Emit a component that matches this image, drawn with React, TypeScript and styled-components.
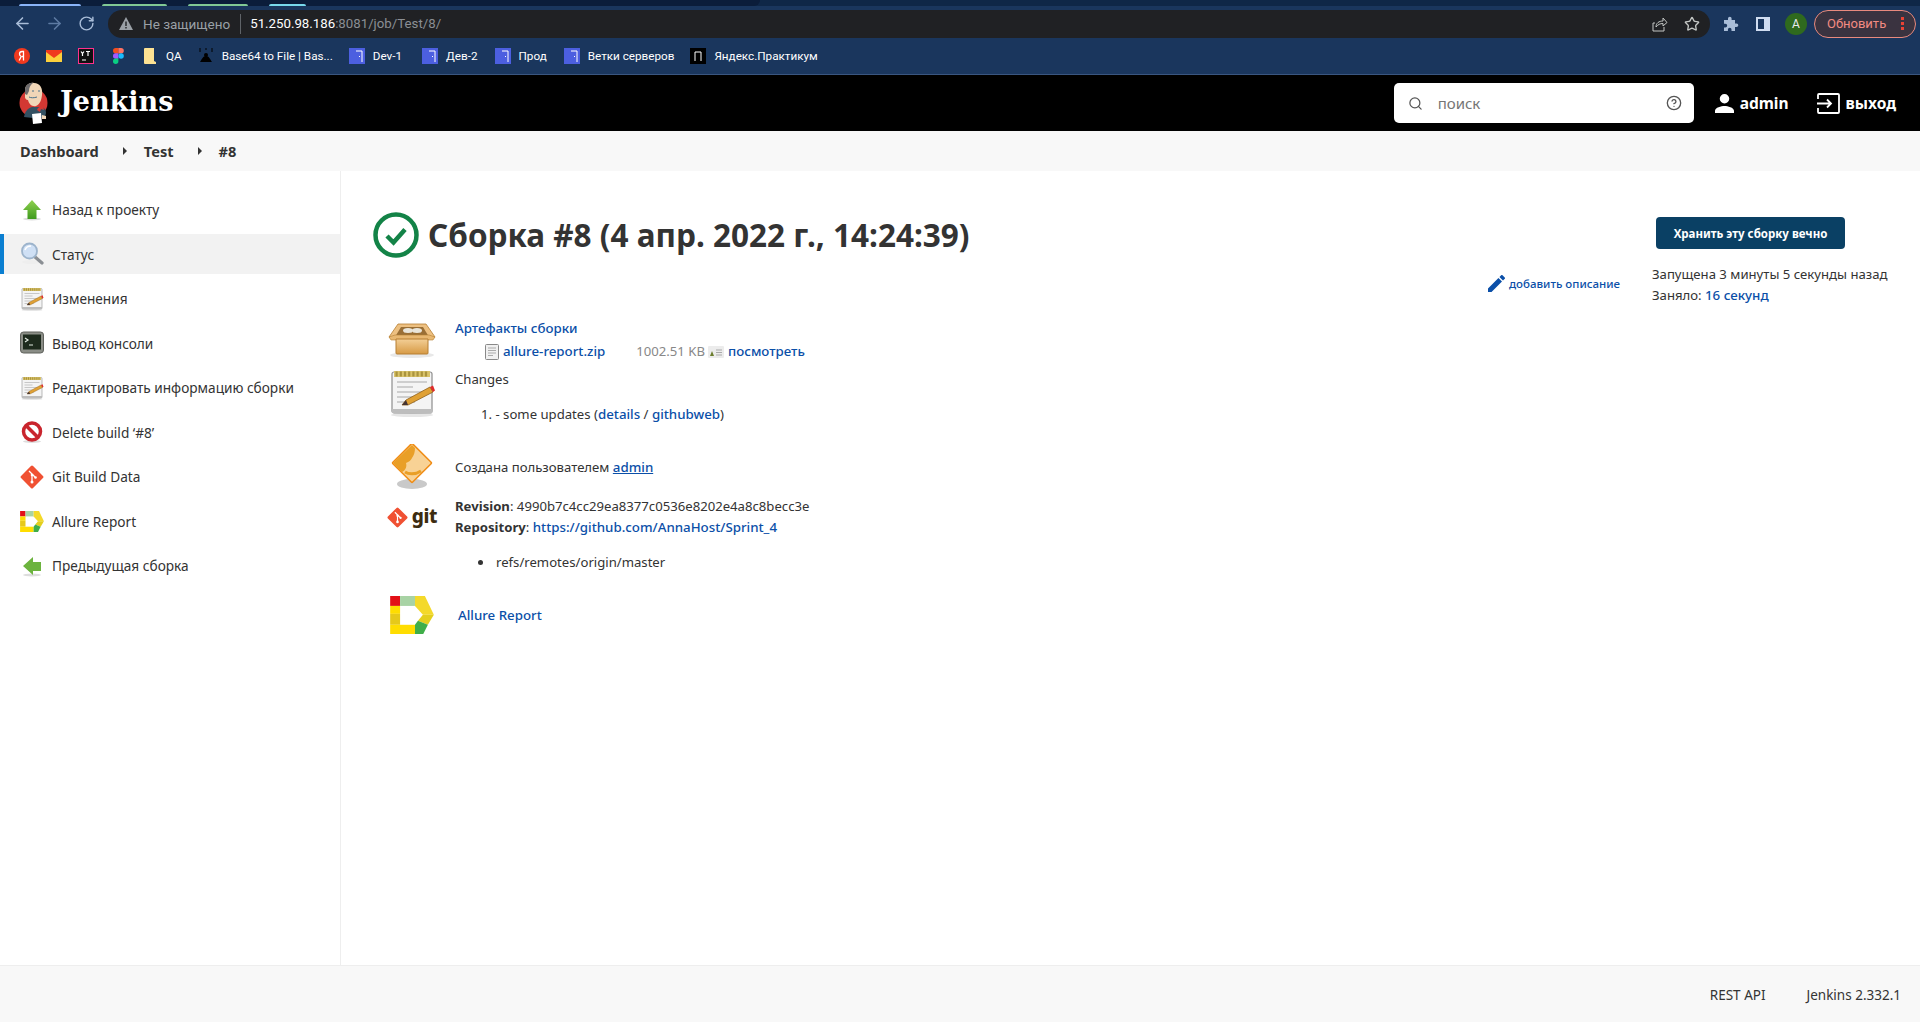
import React from "react";
import styled, { createGlobalStyle } from "styled-components";
import { ArrowLeft, ArrowRight, RotateCw, Star, Search, CircleHelp } from "lucide-react";

const Global = createGlobalStyle`
    html, body { margin: 0; padding: 0; background: #fff; }
    * { box-sizing: border-box; }
    body { font-family: "Noto Sans", "Open Sans", sans-serif; color: #333; }
`;

const Page = styled.div`
    width: 1920px;
    height: 1022px;
    display: flex;
    flex-direction: column;
    overflow: hidden;
`;

/* browser chrome */
const TabStrip = styled.div`
    height: 6px;
    flex: none;
    background: #0f2747;
`;
const ActiveTabs = styled.div`
    width: 760px;
    height: 6px;
    background: #0b1d3a;
    border-bottom-right-radius: 6px;
    display: flex;
    align-items: flex-end;
    padding-left: 19px;
    gap: 21px;
`;
const TabMark = styled.div<{ $w: number; $c: string }>`
    width: ${(p) => p.$w}px;
    height: 2px;
    background: ${(p) => p.$c};
    border-radius: 2px 2px 0 0;
`;
const Toolbar = styled.div`
    height: 35px;
    flex: none;
    background: #1a365d;
    display: flex;
    align-items: center;
    padding: 0 4px 0 6px;
`;
const NavBtn = styled.div<{ $dim?: boolean }>`
    width: 32px;
    display: flex;
    justify-content: center;
    color: ${(p) => (p.$dim ? "#5e7ba3" : "#a9bdd8")};
`;
const Omnibox = styled.div`
    width: 1602px;
    height: 28px;
    margin-left: 6px;
    background: #202124;
    border-radius: 14px;
    display: flex;
    align-items: center;
    padding-left: 11px;
    font-family: "Roboto", sans-serif;
    font-size: 13.25px;
`;
const Insecure = styled.span`
    color: #9aa0a6;
    margin-left: 10px;
    padding-right: 10px;
    border-right: 1px solid #5f6368;
    line-height: 20px;
    font-size: 13.5px;
`;
const Url = styled.span`
    color: #fff;
    margin-left: 9px;
`;
const UrlRest = styled.span`
    color: #8b8f94;
`;
const OmniRight = styled.div`
    margin-left: auto;
    display: flex;
    align-items: center;
    gap: 16px;
    padding-right: 10px;
    color: #c4c7c5;
`;
const ToolIcons = styled.div`
    display: flex;
    align-items: center;
    margin-left: 13px;
`;
const SidePanelBtn = styled.div`
    margin: 0 15px 0 17px;
    display: flex;
`;
const Avatar = styled.div`
    width: 22px;
    height: 22px;
    border-radius: 50%;
    background: #2f6a1e;
    color: #e8eaed;
    font-family: "Roboto", sans-serif;
    font-size: 12px;
    display: flex;
    align-items: center;
    justify-content: center;
`;
const UpdatePill = styled.div`
    width: 102px;
    height: 28px;
    margin-left: 7px;
    border: 1px solid #e98a7e;
    border-radius: 14px;
    background: #3a3340;
    color: #f28b82;
    font-family: "Roboto", sans-serif;
    font-size: 13px;
    display: flex;
    align-items: center;
    padding-left: 12px;
`;
const PillDots = styled.span`
    margin-left: auto;
    margin-right: 11px;
    width: 3px;
    height: 15px;
    background: radial-gradient(circle at center, #ea4335 1.5px, transparent 1.6px) 0 0 / 3px 5px;
`;
const BookmarkBar = styled.div`
    height: 34px;
    flex: none;
    background: #1a365d;
    border-bottom: 1px solid #3a5680;
    display: flex;
    align-items: center;
    gap: 16px;
    padding: 0 0 3px 14px;
`;
const Bookmark = styled.div<{ $ml?: number }>`
    display: flex;
    align-items: center;
    gap: 8px;
    margin-left: ${(p) => p.$ml ?? 0}px;
    color: #fff;
    font-family: "Roboto", sans-serif;
    font-size: 11.7px;
    white-space: nowrap;
`;
const FavBox = styled.span`
    width: 16px;
    height: 16px;
    display: flex;
    align-items: center;
    justify-content: center;
`;

/* jenkins header */
const Header = styled.header`
    height: 56px;
    flex: none;
    background: #000;
    display: flex;
    align-items: center;
    padding: 0 24px 0 19px;
    color: #fff;
`;
const Brand = styled.div`
    font-family: "DejaVu Serif", "Liberation Serif", serif;
    font-weight: 700;
    font-size: 27px;
    margin-left: 11px;
    line-height: 1;
    padding-bottom: 3px;
`;
const SearchBox = styled.div`
    width: 300px;
    height: 40px;
    margin-left: auto;
    background: #fff;
    border-radius: 5px;
    display: flex;
    align-items: center;
    padding: 0 12px 0 14px;
    color: #555;
`;
const SearchText = styled.span`
    margin-left: 15px;
    font-size: 15px;
    color: #757575;
    flex: 1;
`;
const HeadLink = styled.div<{ $ml: number }>`
    display: flex;
    align-items: center;
    gap: 6px;
    margin-left: ${(p) => p.$ml}px;
    font-weight: 700;
    font-size: 15.5px;
`;

const Crumbs = styled.nav`
    height: 40px;
    flex: none;
    background: #f8f8f8;
    display: flex;
    align-items: center;
    padding-left: 20px;
    font-weight: 700;
    font-size: 14.6px;
    color: #333;
`;
const CrumbArrow = styled.span`
    width: 0;
    height: 0;
    margin: 0 17px 0 24px;
    border-left: 4px solid #333;
    border-top: 4px solid transparent;
    border-bottom: 4px solid transparent;
`;

const Body = styled.div`
    flex: 1;
    display: flex;
    min-height: 0;
`;
const Side = styled.aside`
    width: 341px;
    flex: none;
    padding-top: 18.5px;
    border-right: 1px solid #eee;
    display: flex;
    flex-direction: column;
    gap: 4.55px;
`;
const SideItem = styled.div<{ $active?: boolean }>`
    height: 40px;
    flex: none;
    display: flex;
    align-items: center;
    gap: 8px;
    font-size: 13.65px;
    color: #333;
    background: ${(p) => (p.$active ? "#f2f2f2" : "transparent")};
    border-left: ${(p) => (p.$active ? "4px solid #0b7fd1" : "none")};
    padding-left: ${(p) => (p.$active ? 16 : 20)}px;
`;

const Main = styled.main`
    flex: 1;
    padding: 41px 32px 0 32px;
    font-size: 13.15px;
    color: #333;
    min-width: 0;
`;
const TopRow = styled.div`
    display: flex;
    height: 106px;
`;
const Title = styled.h1`
    margin: 0;
    display: flex;
    align-items: flex-start;
    gap: 9px;
    flex: 1;
    font-size: 31.5px;
    font-weight: 700;
    line-height: 46px;
    color: #333;
    white-space: nowrap;
`;
const DescLink = styled.a`
    align-self: flex-end;
    display: flex;
    align-items: center;
    gap: 4px;
    color: #0b4fa8;
    font-size: 11.5px;
    font-weight: 500;
    margin-right: 32px;
    margin-bottom: 26px;
`;
const Aside = styled.div`
    width: 236px;
    display: flex;
    flex-direction: column;
    line-height: 21px;
`;
const KeepBtn = styled.button`
    width: 189px;
    height: 32px;
    margin: 5px 0 15px 4px;
    border: none;
    border-radius: 4px;
    background: #0a4064;
    color: #fff;
    font-family: inherit;
    font-weight: 700;
    font-size: 11.5px;
`;
const AsideLine = styled.div`
    width: 100%;
    white-space: nowrap;
`;
const Link = styled.a<{ $underline?: boolean; $ml?: number }>`
    color: #0b4fa8;
    font-weight: 500;
    font-size: 13.3px;
    margin-left: ${(p) => p.$ml ?? 0}px;
    text-decoration: ${(p) => (p.$underline ? "underline" : "none")};
`;

const Rows = styled.div`
    display: flex;
    flex-direction: column;
    margin-left: 15px;
`;
const Row = styled.div<{ $h: number; $center?: boolean; $mb?: number }>`
    display: flex;
    gap: 19px;
    height: ${(p) => p.$h}px;
    margin-bottom: ${(p) => p.$mb ?? 0}px;
    align-items: ${(p) => (p.$center ? "center" : "flex-start")};
`;
const RowIcon = styled.div<{ $mt?: number }>`
    width: 48px;
    flex: none;
    display: flex;
    justify-content: center;
    margin-top: ${(p) => p.$mt ?? 0}px;
`;
const RowText = styled.div<{ $ml?: number }>`
    line-height: 21px;
    white-space: nowrap;
    margin-left: ${(p) => p.$ml ?? 0}px;
`;
const FileLine = styled.div`
    display: flex;
    align-items: center;
    margin: 2px 0 0 30px;
    line-height: 21px;
`;
const FileSize = styled.span`
    color: #888;
    margin: 0 3px 0 31px;
`;
const ChangeLine = styled.div`
    margin: 14px 0 0 26px;
`;
const RefLine = styled.div`
    display: flex;
    align-items: center;
    gap: 13px;
    margin: 14px 0 0 23px;
`;
const Dot = styled.span`
    width: 5px;
    height: 5px;
    border-radius: 50%;
    background: #333;
`;
const Strong = styled.b`
    font-weight: 700;
`;

const Footer = styled.footer`
    height: 57px;
    flex: none;
    background: #f8f8f8;
    border-top: 1px solid #eee;
    display: flex;
    align-items: center;
    justify-content: flex-end;
    gap: 41px;
    padding: 2px 19px 0 0;
    font-size: 13.5px;
    color: #333;
`;

/* --- drawings --- */
const JenkinsLogo = () => (
    <svg width="30" height="42" viewBox="0 0 30 42">
        <circle cx="14.500" cy="21" r="14" fill="#d33833" />
        <path d="M5 35c1-6 4-9 8-10l10 0c3 1 4 3 4 6l-1 4-8 1-4 0z" fill="#335061" />
        <path d="M6 8c0-5 5-8 9-7 6 0 9 5 8 12-.5 5-2 9-6 11-4 1-7-2-8-6-2 0-3.500-2-3-4 0-1 0-4 0-6z" fill="#f0d6b7" />
        <path d="M6 8c0-5 5-8 8-7-3 2-4 5-4 8l-2 4-2-1z" fill="#6d6b6d" />
        <path d="M19 26l5-3 1 5-3-1-1 3-3-2z" fill="#d33833" />
        <path d="M13 32l9-1 1 10-9 1z" fill="#fff" />
        <path d="M23 33l4 1 0 3-4 0z" fill="#f0d6b7" />
        <path d="M10 15c2 1 5 1 8 0M13 9h2M19 9h2" stroke="#49728b" strokeWidth="1" fill="none" />
    </svg>
);

const Arrow = ({ up }: { up?: boolean }) => (
    <svg width="24" height="24" viewBox="0 0 24 24">
        <defs>
            <linearGradient id="arrowG" x1="0" y1="0" x2="0" y2="1">
                <stop offset="0" stopColor="#8fd14f" />
                <stop offset="1" stopColor="#3f9a1e" />
            </linearGradient>
        </defs>
        <ellipse cx="12" cy="21" rx="9" ry="1.500" fill="#ddd" />
        {up ? (
            <path d="M12 2 L21 12 L16.500 12 L16.500 21 L7.500 21 L7.500 12 L3 12 Z" fill="url(#arrowG)" />
        ) : (
            <path d="M3 12 L13 3 L13 8 L21 8 L21 17 L13 17 L13 21 Z" fill="#6cb33e" />
        )}
    </svg>
);

const Magnifier = () => (
    <svg width="24" height="24" viewBox="0 0 24 24">
        <ellipse cx="11" cy="20" rx="9" ry="2" fill="#eee" />
        <path d="M14.500 14.500L22 21" stroke="#8b8f94" strokeWidth="3.200" strokeLinecap="round" />
        <circle cx="9.500" cy="9" r="7.500" fill="#cfe0f5" stroke="#9db4cc" strokeWidth="1.800" />
        <path d="M5 8c1-3 3-4 6-4" stroke="#fff" strokeWidth="1.500" fill="none" />
    </svg>
);

const Notepad = ({ size = 24 }: { size?: number }) => (
    <svg width={size} height={size} viewBox="0 0 48 48">
        <ellipse cx="24" cy="46" rx="21" ry="2" fill="#e6e6e6" />
        <rect x="4" y="3" width="40" height="41" rx="2" fill="#f4f4f4" stroke="#8d8d8d" strokeWidth="1.200" />
        <rect x="4" y="40" width="40" height="4" fill="#bdbdbd" />
        <rect x="6" y="2" width="36" height="6" fill="#d9c36a" />
        <path d="M7.500 5h33" stroke="#8a7420" strokeWidth="5" strokeDasharray="2.200 2" opacity="0.6" />
        <path d="M9 13h30M9 18h16M9 23h30M9 28h16M9 33h18" stroke="#a8a8a8" strokeWidth="1.200" />
        <path d="M14 36l4-5 24-13 3 5-25 13z" fill="#e0a135" stroke="#8f5f1a" strokeWidth="0.800" />
        <path d="M42 18l3 5 2-1.500-2-5z" fill="#e02b2b" />
        <path d="M14 36l4-5 2 5z" fill="#433" />
    </svg>
);

const Terminal = () => (
    <svg width="24" height="24" viewBox="0 0 24 24">
        <rect x="0.500" y="1" width="23" height="21" rx="3" fill="#8a8d86" stroke="#5e605b" />
        <rect x="3" y="3.500" width="18" height="15" fill="#1d2a1d" />
        <path d="M5 7l3 2-3 2M9 14h4" stroke="#dfe8df" strokeWidth="1.200" fill="none" />
    </svg>
);

const NoEntry = () => (
    <svg width="24" height="24" viewBox="0 0 24 24">
        <ellipse cx="12" cy="21.500" rx="9" ry="1.500" fill="#ddd" />
        <circle cx="12" cy="11.500" r="8.500" fill="#fff" stroke="#c9252d" strokeWidth="3.500" />
        <path d="M6 5.500L18 17.500" stroke="#c9252d" strokeWidth="3.500" />
    </svg>
);

const GitDiamond = ({ size = 24 }: { size?: number }) => (
    <svg width={size} height={size} viewBox="0 0 24 24">
        <rect x="3.500" y="3.500" width="17" height="17" rx="1.500" transform="rotate(45 12 12)" fill="#f05133" />
        <path d="M9 6l6 6M12 9v9M12 9l0 0" stroke="#fff" strokeWidth="1.300" fill="none" />
        <circle cx="12" cy="17" r="1.500" fill="#fff" />
        <circle cx="12" cy="10" r="1.300" fill="#fff" />
        <circle cx="15.500" cy="12.500" r="1.300" fill="#fff" />
    </svg>
);

const AllureLogo = ({ size = 24 }: { size?: number }) => (
    <svg width={size} height={size * 0.88} viewBox="0 0 44 39">
        <path d="M0 0h10v10H0z" fill="#e31017" />
        <path d="M10 0h15v10H10z" fill="#a8d3a4" />
        <path d="M25 0h10l9 19H33L25 10z" fill="#f4d92a" />
        <path d="M33 19h11l-6 10-10-4z" fill="#e4cf1d" />
        <path d="M0 10h10v8H0z" fill="#ffdd00" />
        <path d="M0 18h10v11H0z" fill="#e6c91a" />
        <path d="M0 29h25v10H0z" fill="#ffdd00" />
        <path d="M25 29l3-4 10 4-5 10h-8z" fill="#3fae49" />
    </svg>
);

const Pkg = () => (
    <svg width="48" height="36" viewBox="0 0 48 36">
        <defs>
            <linearGradient id="boxG" x1="0" y1="0" x2="0" y2="1">
                <stop offset="0" stopColor="#f3cf96" />
                <stop offset="1" stopColor="#d79a45" />
            </linearGradient>
        </defs>
        <ellipse cx="24" cy="33" rx="22" ry="3" fill="#e8e8e8" />
        <path d="M10 2h28l9 13-2 1H3l-2-1z" fill="#edc081" stroke="#b67f32" strokeWidth="0.800" />
        <path d="M13 5h22l6 10H7z" fill="#9a6f36" />
        <ellipse cx="20" cy="8.500" rx="5" ry="2.500" fill="#e9e5da" />
        <ellipse cx="29" cy="8.500" rx="5" ry="2.500" fill="#e9e5da" />
        <path d="M7 13h34l6 2-2 3H3l-2-3z" fill="#e8b872" stroke="#b67f32" strokeWidth="0.600" />
        <path d="M8 17h32v14a1 1 0 0 1-1 1H9a1 1 0 0 1-1-1z" fill="url(#boxG)" stroke="#b67f32" />
    </svg>
);

const UserDiamond = () => (
    <svg width="42" height="46" viewBox="0 0 42 46">
        <ellipse cx="21" cy="40" rx="15" ry="5" fill="#c9c9c9" />
        <rect x="7" y="5" width="28" height="28" rx="1" transform="rotate(45 21 19)" fill="#f8d295" stroke="#f08c14" strokeWidth="1.500" />
        <path d="M21 1L2 19l9 9c4-2 5-6 4-9 3-1 5-3 6-5 2-3 3-6 3-10z" fill="#e99f27" />
        <path d="M30 27c-6 4-13 3-16 1" stroke="#e99f27" strokeWidth="3" fill="none" />
    </svg>
);

const FileIcon = () => (
    <svg width="14" height="16" viewBox="0 0 14 16">
        <rect x="0.500" y="0.500" width="13" height="15" rx="1" fill="#f0f0f0" stroke="#888" />
        <path d="M3 4h8M3 6.500h8M3 9h8M3 11.500h5" stroke="#aaa" />
    </svg>
);

const ViewIcon = () => (
    <svg width="16" height="12" viewBox="0 0 16 12">
        <rect width="16" height="12" rx="1" fill="#ececec" />
        <path d="M2 10l2-5 2 5z" fill="#6b7d2e" />
        <path d="M8 4h6M8 6.500h6M8 9h6" stroke="#aaa" />
    </svg>
);

const SuccessIcon = () => (
    <svg width="46" height="46" viewBox="0 0 46 46">
        <circle cx="23" cy="23" r="20.500" fill="none" stroke="#138347" strokeWidth="4.500" />
        <path d="M14 24l6.500 6.500L32 17.500" fill="none" stroke="#138347" strokeWidth="4.500" />
    </svg>
);

const PencilIcon = () => (
    <svg width="17" height="17" viewBox="3 3 18 18">
        <path fill="#0b4fa8" d="M3 17.250V21h3.750L17.810 9.940l-3.750-3.750L3 17.250zM20.710 7.040a1 1 0 0 0 0-1.410l-2.340-2.340a1 1 0 0 0-1.410 0l-1.830 1.830 3.750 3.750 1.830-1.830z" />
    </svg>
);

const UserIcon = () => (
    <svg width="19" height="19" viewBox="4 4 16 16">
        <path fill="#fff" d="M12 12a4 4 0 1 0 0-8 4 4 0 0 0 0 8zm0 2c-2.670 0-8 1.340-8 4v2h16v-2c0-2.660-5.330-4-8-4z" />
    </svg>
);

const LogoutIcon = () => (
    <svg width="23" height="21" viewBox="0 0 23 21" fill="none" stroke="#fff" strokeWidth="1.800">
        <path d="M1 6V2a1 1 0 0 1 1-1h19a1 1 0 0 1 1 1v17a1 1 0 0 1-1 1H2a1 1 0 0 1-1-1v-4" />
        <path d="M0 10.500h14M10 6.500l4 4-4 4" />
    </svg>
);

const ShareIcon = () => (
    <svg width="16" height="16" viewBox="0 0 16 16" fill="none" stroke="#c4c7c5" strokeWidth="1">
        <path d="M3 7H1v8h11v-4" />
        <path d="M4 11c0-4 3-6 7-6V2l4 4.500L11 10V7.500c-3 0-5 1-7 3.500z" />
    </svg>
);

const PuzzleIcon = () => (
    <svg width="16" height="16" viewBox="0 0 16 16">
        <path fill="#a9bdd8" d="M1 4h4V2.500a1.800 1.800 0 0 1 3.600 0V4H12v3.400h1.500a1.800 1.800 0 0 1 0 3.600H12v4H8.500v-1.500a1.800 1.800 0 0 0-3.600 0V15H1v-3.500h1.300a1.900 1.900 0 0 0 0-3.800H1z" />
    </svg>
);

const SideIcon = () => (
    <svg width="14" height="14" viewBox="0 0 14 14">
        <rect x="0" y="0" width="14" height="14" fill="#cfdcf0" />
        <rect x="2" y="2" width="6" height="10" fill="#1a365d" />
    </svg>
);

const Warn = () => (
    <svg width="14" height="13" viewBox="0 0 14 13">
        <path fill="#9aa0a6" d="M7 0l7 13H0z" />
        <path stroke="#202124" strokeWidth="1.400" d="M7 4.500v4.500M7 10v1.500" />
    </svg>
);

const YaIcon = () => (
    <svg width="16" height="16" viewBox="0 0 16 16">
        <circle cx="8" cy="8" r="8" fill="#f0391e" />
        <path d="M9.500 12.500V3.500H8.200C6.500 3.500 5.500 4.500 5.500 6c0 1.300.7 2 1.700 2.500l-2 4M9.500 8.500H8" stroke="#fff" strokeWidth="1.300" fill="none" />
    </svg>
);
const MailIcon = () => (
    <svg width="16" height="12" viewBox="0 0 16 12">
        <rect width="16" height="12" fill="#fcd03c" />
        <path d="M0 0h16v2L8 8 0 2z" fill="#f0391e" />
    </svg>
);
const YtIcon = () => (
    <svg width="16" height="16" viewBox="0 0 16 16">
        <rect x="0.500" y="0.500" width="15" height="15" fill="#111" stroke="#ff318c" />
        <path d="M3 3.500l1.500 2 1.500-2M4.500 5.500V8M8 3.500h4M10 3.500V8M4 12h4" stroke="#fff" strokeWidth="1.200" fill="none" />
    </svg>
);
const FigmaIcon = () => (
    <svg width="11" height="16" viewBox="0 0 11 16">
        <path d="M0 2.700A2.700 2.700 0 0 1 2.700 0h2.700v5.400H2.700A2.700 2.700 0 0 1 0 2.700z" fill="#f24e1e" />
        <path d="M5.400 0h2.700a2.700 2.700 0 0 1 0 5.400H5.400z" fill="#ff7262" />
        <path d="M0 8a2.700 2.700 0 0 1 2.700-2.700h2.700v5.400H2.700A2.700 2.700 0 0 1 0 8z" fill="#a259ff" />
        <circle cx="8.100" cy="8" r="2.700" fill="#1abcfe" />
        <path d="M0 13.300a2.700 2.700 0 0 1 2.700-2.700h2.700v2.700a2.700 2.700 0 0 1-5.400 0z" fill="#0acf83" />
    </svg>
);
const FolderIcon = () => (
    <svg width="12" height="16" viewBox="0 0 12 16">
        <path d="M0 1a1 1 0 0 1 1-1h9v13l2 1v2H1a1 1 0 0 1-1-1z" fill="#fde293" />
    </svg>
);
const BaseIcon = () => (
    <svg width="16" height="16" viewBox="0 0 16 16">
        <circle cx="8" cy="7" r="2" fill="#000" />
        <path d="M8 8c-3 0-4 3-6 6h12c-2-3-3-6-6-6z" fill="#000" />
        <path d="M1 1h2M7 1h2M13 1h2M1 3h2M13 3h2" stroke="#000" />
    </svg>
);
const DoorIcon = () => (
    <svg width="16" height="16" viewBox="0 0 16 16">
        <rect width="16" height="16" fill="#4c5fe0" />
        <path d="M7 3h6v11" stroke="#fff" fill="none" />
        <path d="M10.500 8v1" stroke="#fff" />
    </svg>
);
const PraktIcon = () => (
    <svg width="16" height="16" viewBox="0 0 16 16">
        <rect width="16" height="16" fill="#000" />
        <path d="M5 13V4h6v9" stroke="#fff" strokeWidth="1" fill="none" />
    </svg>
);
const GitWord = styled.span`
    font-weight: 800;
    font-size: 19px;
    line-height: 20px;
    letter-spacing: -0.4px;
    color: #3c2c10;
    margin: -3px 0 0 4px;
`;
const GitLogo = styled.div`
    display: flex;
    align-items: center;
    margin-top: 11px;
`;

const sideItems: [React.ReactNode, string, boolean?][] = [
    [<Arrow up />, "Назад к проекту"],
    [<Magnifier />, "Статус", true],
    [<Notepad />, "Изменения"],
    [<Terminal />, "Вывод консоли"],
    [<Notepad />, "Редактировать информацию сборки"],
    [<NoEntry />, "Delete build ‘#8’"],
    [<GitDiamond />, "Git Build Data"],
    [<AllureLogo />, "Allure Report"],
    [<Arrow />, "Предыдущая сборка"],
];

export default function App() {
    return (
        <Page>
            <Global />
            <TabStrip>
                <ActiveTabs>
                    <TabMark $w={62} $c="#8ab4f8" />
                    <TabMark $w={65} $c="#81c995" />
                    <TabMark $w={60} $c="#81c995" />
                    <TabMark $w={37} $c="#78d9ec" />
                </ActiveTabs>
            </TabStrip>
            <Toolbar>
                <NavBtn><ArrowLeft size={19} /></NavBtn>
                <NavBtn $dim><ArrowRight size={19} /></NavBtn>
                <NavBtn><RotateCw size={17} /></NavBtn>
                <Omnibox>
                    <Warn />
                    <Insecure>Не защищено</Insecure>
                    <Url>51.250.98.186<UrlRest>:8081/job/Test/8/</UrlRest></Url>
                    <OmniRight>
                        <ShareIcon />
                        <Star size={16} />
                    </OmniRight>
                </Omnibox>
                <ToolIcons>
                    <PuzzleIcon />
                    <SidePanelBtn><SideIcon /></SidePanelBtn>
                    <Avatar>A</Avatar>
                    <UpdatePill>Обновить<PillDots /></UpdatePill>
                </ToolIcons>
            </Toolbar>
            <BookmarkBar>
                <Bookmark><FavBox><YaIcon /></FavBox></Bookmark>
                <Bookmark><FavBox><MailIcon /></FavBox></Bookmark>
                <Bookmark><FavBox><YtIcon /></FavBox></Bookmark>
                <Bookmark><FavBox><FigmaIcon /></FavBox></Bookmark>
                <Bookmark><FavBox><FolderIcon /></FavBox>QA</Bookmark>
                <Bookmark><FavBox><BaseIcon /></FavBox>Base64 to File | Bas...</Bookmark>
                <Bookmark><FavBox><DoorIcon /></FavBox>Dev-1</Bookmark>
                <Bookmark $ml={4}><FavBox><DoorIcon /></FavBox>Дев-2</Bookmark>
                <Bookmark $ml={1}><FavBox><DoorIcon /></FavBox>Прод</Bookmark>
                <Bookmark $ml={1}><FavBox><DoorIcon /></FavBox>Ветки серверов</Bookmark>
                <Bookmark><FavBox><PraktIcon /></FavBox>Яндекс.Практикум</Bookmark>
            </BookmarkBar>

            <Header>
                <JenkinsLogo />
                <Brand>Jenkins</Brand>
                <SearchBox>
                    <Search size={15} />
                    <SearchText>поиск</SearchText>
                    <CircleHelp size={16} />
                </SearchBox>
                <HeadLink $ml={21}><UserIcon />admin</HeadLink>
                <HeadLink $ml={28}><LogoutIcon />выход</HeadLink>
            </Header>
            <Crumbs>
                Dashboard<CrumbArrow />Test<CrumbArrow />#8
            </Crumbs>

            <Body>
                <Side>
                    {sideItems.map(([icon, label, active]) => (
                        <SideItem key={label} $active={active}>
                            {icon}
                            {label}
                        </SideItem>
                    ))}
                </Side>
                <Main>
                    <TopRow>
                        <Title>
                            <SuccessIcon />
                            Сборка #8 (4 апр. 2022 г., 14:24:39)
                        </Title>
                        <DescLink><PencilIcon />добавить описание</DescLink>
                        <Aside>
                            <KeepBtn>Хранить эту сборку вечно</KeepBtn>
                            <AsideLine>Запущена 3 минуты 5 секунды назад</AsideLine>
                            <AsideLine>Заняло: <Link>16 секунд</Link></AsideLine>
                        </Aside>
                    </TopRow>
                    <Rows>
                        <Row $h={51}>
                            <RowIcon $mt={4}><Pkg /></RowIcon>
                            <RowText>
                                <Link>Артефакты сборки</Link>
                                <FileLine>
                                    <FileIcon />
                                    <Link $ml={4}>allure-report.zip</Link>
                                    <FileSize>1002.51 KB</FileSize>
                                    <ViewIcon />
                                    <Link $ml={4}>посмотреть</Link>
                                </FileLine>
                            </RowText>
                        </Row>
                        <Row $h={77}>
                            <RowIcon><Notepad size={48} /></RowIcon>
                            <RowText>
                                Changes
                                <ChangeLine>
                                    1. - some updates (<Link>details</Link> / <Link>githubweb</Link>)
                                </ChangeLine>
                            </RowText>
                        </Row>
                        <Row $h={42} $mb={8} $center>
                            <RowIcon><UserDiamond /></RowIcon>
                            <RowText>Создана пользователем <Link $underline>admin</Link></RowText>
                        </Row>
                        <Row $h={95}>
                            <RowIcon>
                                <GitLogo><GitDiamond size={21} /><GitWord>git</GitWord></GitLogo>
                            </RowIcon>
                            <RowText>
                                <Strong>Revision</Strong>: 4990b7c4cc29ea8377c0536e8202e4a8c8becc3e
                                <br />
                                <Strong>Repository</Strong>: <Link>https://github.com/AnnaHost/Sprint_4</Link>
                                <RefLine><Dot />refs/remotes/origin/master</RefLine>
                            </RowText>
                        </Row>
                        <Row $h={48} $center>
                            <RowIcon><AllureLogo size={44} /></RowIcon>
                            <RowText $ml={3}><Link>Allure Report</Link></RowText>
                        </Row>
                    </Rows>
                </Main>
            </Body>

            <Footer>
                <span>REST API</span>
                <span>Jenkins 2.332.1</span>
            </Footer>
        </Page>
    );
}
